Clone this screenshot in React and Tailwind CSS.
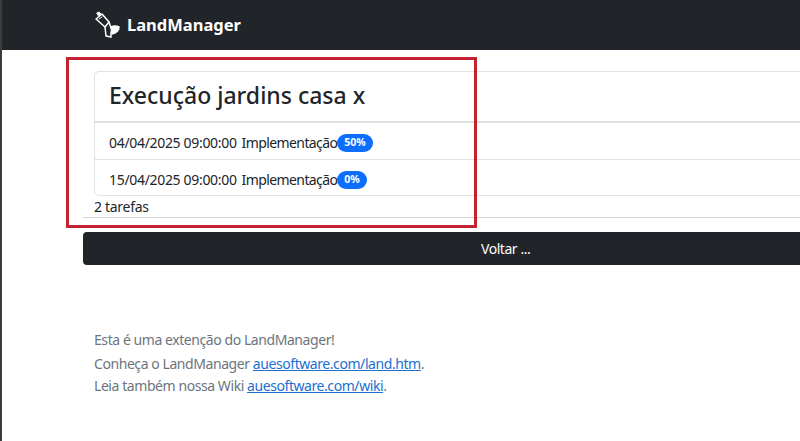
import React from 'react';

function Logo() {
  return (
    <svg width="26" height="28" viewBox="0 0 26 28" fill="none" stroke="#fff" strokeWidth="1.5" strokeLinejoin="round" strokeLinecap="round">
      <path d="M3 2 L5 1 L7 3 L5 5 Z" fill="#fff" strokeWidth="1" />
      <path d="M2 8 L8 3 L15 11 L11 16 Z" />
      <path d="M5 8 L8 6" strokeWidth="1" />
      <path d="M11 16 L12 25 L17 26 L17 21" />
      <path d="M15 11 L17 17" />
      <path d="M17 16 Q21 14 25 16 Q25 21 18 23 Z" fill="#fff" stroke="#fff" />
    </svg>
  );
}

function Task({ date, name, pct }) {
  return (
    <div className="h-[37px] flex items-center pl-[14px] pt-[2px] border-b border-[#dee2e6] last:border-b-0 last:h-[36px] text-[14px] text-[#212529]">
      <span className="mr-[5px] tracking-[-0.32px]">{date}</span>
      <span className="tracking-[-0.6px]">{name}</span>
      <span className="bg-[#0d6efd] text-white text-[10.5px] font-bold rounded-full px-[7px] h-[18px] mt-[1px] flex items-center">{pct}</span>
    </div>
  );
}

export default function App() {
  return (
    <div className="relative w-[800px] h-[441px] overflow-hidden bg-white border-l-2 border-[#3a3b3d]" style={{ fontFamily: '"Noto Sans", "Open Sans", sans-serif' }}>
      <nav className="h-[50px] bg-[#212529] flex items-center pl-[92px] gap-[7px] text-white">
        <Logo />
        <span className="text-[16.5px] font-bold">LandManager</span>
      </nav>

      <main className="pl-[81px] w-[900px]">
        <div className="mt-[21px] pl-[11px] border-b border-[#d5d8db] h-[147px]">
          <div className="border border-[#dee2e6] rounded-[5px] h-[125px]">
            <div className="h-[51px] flex items-center pl-[14px] pb-[3px] border-b-2 border-[#dee2e6]">
              <h1 className="text-[23px] font-medium text-[#212529]">Execução jardins casa x</h1>
            </div>
            <Task date="04/04/2025 09:00:00" name="Implementação" pct="50%" />
            <Task date="15/04/2025 09:00:00" name="Implementação" pct="0%" />
          </div>
          <p className="text-[14px] text-[#212529] leading-[22px] tracking-[-0.3px]">2 tarefas</p>
        </div>

        <div className="mt-[14px] w-[900px] h-[33px] bg-[#212529] rounded-[4px] text-white text-[14px] tracking-[-0.45px] flex items-center pl-[398px]">
          Voltar ...
        </div>

        <footer className="mt-[64px] pl-[11px] text-[14px] tracking-[-0.43px] text-[#6c757d]">
          <p className="leading-[21px] mb-[3px]">Esta é uma extenção do LandManager!</p>
          <p className="leading-[22px]">
            Conheça o LandManager <a href="#" className="text-[#1a6fd0] underline">auesoftware.com/land.htm</a>.
          </p>
          <p className="leading-[22px]">
            Leia também nossa Wiki <a href="#" className="text-[#1a6fd0] underline">auesoftware.com/wiki</a>.
          </p>
        </footer>
      </main>

      {/* annotation drawn over the screenshot */}
      <div className="absolute left-[64px] top-[57px] w-[411px] h-[171px] border-[3px] border-[#c5222f] pointer-events-none" />
    </div>
  );
}
